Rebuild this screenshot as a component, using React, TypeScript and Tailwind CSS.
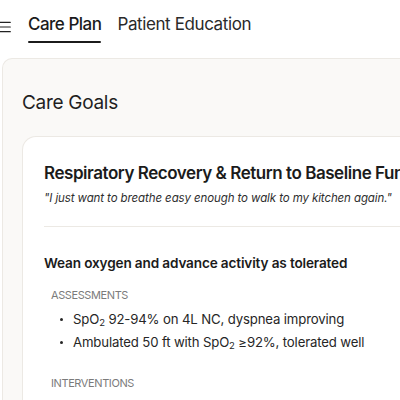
import { Menu } from "lucide-react";

const assessments = [
  <>
    SpO<sub className="align-baseline text-[9.5px]">2</sub> 92-94% on 4L NC, dyspnea improving
  </>,
  <>
    Ambulated 50 ft with SpO<sub className="align-baseline text-[9.5px]">2</sub> ≥92%, tolerated well
  </>,
];

export default function App() {
  return (
    <div className="h-[400px] w-[400px] overflow-hidden bg-white font-['Inter',sans-serif] text-[#1b1b1b]">
      <header className="flex h-[58px] items-start bg-white">
        <Menu className="-ml-[3px] mt-[19px] size-[16px] shrink-0 text-[#222]" strokeWidth={1.7} aria-hidden />
        <nav className="ml-[15px] mt-[14px] flex gap-4">
          <div className="flex flex-col">
            <span className="text-[17px] font-medium leading-[20px] tracking-[-0.5px]">Care Plan</span>
            <span className="mt-[7px] h-[2px] rounded-full bg-[#1b1b1b]" />
          </div>
          <span className="text-[17px] leading-[20px] tracking-[-0.4px] text-[#2a2a2a]">Patient Education</span>
        </nav>
      </header>

      <main className="ml-[2px] h-full rounded-tl-[10px] border-l border-t border-[#ece9e4] bg-[#faf9f7] pl-[19px] pt-[33px]">
        <h1 className="text-[19px] leading-[22px] tracking-[-0.3px] text-[#1f1f1f]">Care Goals</h1>

        <section className="mt-[22px] min-h-[300px] w-[440px] rounded-tl-[14px] border-l border-t border-[#ece9e4] bg-white pl-[21px] pt-[25px]">
          <h2 className="whitespace-nowrap text-[17px] font-semibold leading-[22px] tracking-[-0.45px]">
            Respiratory Recovery &amp; Return to Baseline Function
          </h2>
          <p className="mt-[6px] whitespace-nowrap text-[11.5px] italic leading-[16px] tracking-[-0.1px] text-[#2e2e2e]">
            "I just want to breathe easy enough to walk to my kitchen again."
          </p>

          <div className="mt-[20px] h-px bg-[#ece9e4]" />

          <h3 className="mt-[27px] text-[13.6px] font-semibold leading-[18px] tracking-[-0.15px]">
            Wean oxygen and advance activity as tolerated
          </h3>

          <div className="pl-[7px]">
            <p className="mt-[16px] text-[11px] uppercase leading-[14px] tracking-[-0.4px] text-[#7b7b7b]">Assessments</p>
            <ul className="mt-[8px] flex flex-col gap-[5px] pl-[9px]">
              {assessments.map((item, i) => (
                <li key={i} className="flex items-center gap-[10px] text-[13.2px] leading-[18px] tracking-[-0.15px] text-[#262626]">
                  <span className="mt-[1px] size-[3px] shrink-0 rounded-full bg-[#262626]" />
                  <span className="whitespace-nowrap">{item}</span>
                </li>
              ))}
            </ul>
            <p className="mt-[25px] text-[11px] uppercase leading-[14px] tracking-[-0.4px] text-[#7b7b7b]">Interventions</p>
          </div>
        </section>
      </main>
    </div>
  );
}
